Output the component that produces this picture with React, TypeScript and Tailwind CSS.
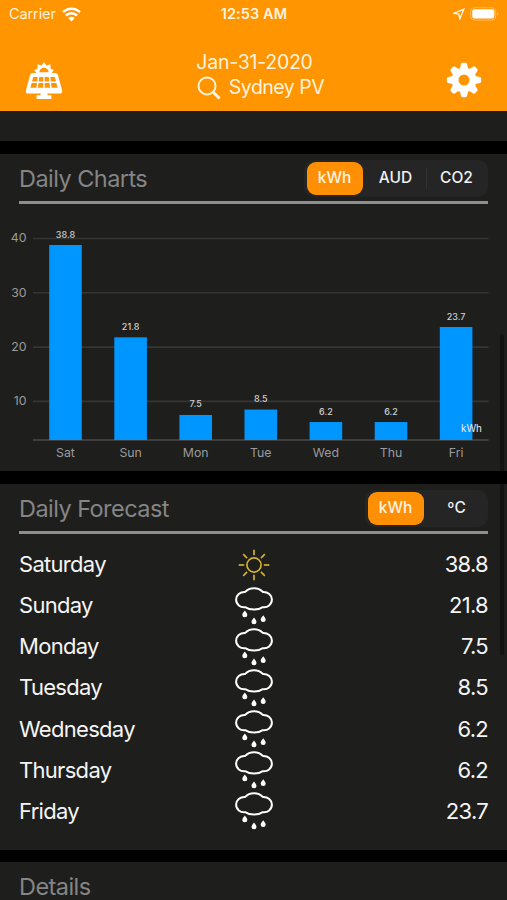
type Day = {
  name: string;
  kwh: number;
  sunny?: boolean;
};

const DAYS: Day[] = [
  { name: 'Saturday', kwh: 38.8, sunny: true },
  { name: 'Sunday', kwh: 21.8 },
  { name: 'Monday', kwh: 7.5 },
  { name: 'Tuesday', kwh: 8.5 },
  { name: 'Wednesday', kwh: 6.2 },
  { name: 'Thursday', kwh: 6.2 },
  { name: 'Friday', kwh: 23.7 },
];

function WifiIcon() {
  return (
    <svg width="19" height="15" viewBox="0 0 19 15" fill="none" stroke="#fff" strokeWidth="2.5">
      <path d="M1 5.2a12 12 0 0 1 17 0" />
      <path d="M4 8.5a7.8 7.8 0 0 1 11 0" />
      <path d="M9.5 14.4 6.3 11a4.5 4.5 0 0 1 6.4 0Z" fill="#fff" stroke="none" />
    </svg>
  );
}

function BatteryIcon() {
  return (
    <svg width="29" height="14" viewBox="0 0 29 14">
      <rect x="0.7" y="0.7" width="25" height="12.4" rx="3.6" fill="none" stroke="#ffd08a" strokeOpacity="0.65" />
      <rect x="2.3" y="2.3" width="22" height="9.2" rx="2" fill="#fff" />
      <path d="M27 4.7c1.8.7 1.8 3.7 0 4.4Z" fill="#ffd08a" fillOpacity="0.75" />
    </svg>
  );
}

function SolarPanelIcon() {
  return (
    <svg width="38" height="38" viewBox="0 0 38 38" fill="#fff">
      <path d="m19 0 2.3 3.6 4.2-1.3v4.2l3.2 1.5-2.2 3.5H11.5L9.3 8l3.2-1.500V2.300l4.200 1.300Z" />
      <path d="M14.4 10.3a4.6 4.6 0 0 1 9.2 0Z" fill="#ff9500" />
      <path d="M8.2 11h21.6c1.9 0 2.9.9 3.3 2.5l4 14.9c.5 2-.5 3.2-2.4 3.2H3.3c-1.9 0-2.9-1.2-2.4-3.2l4-14.900C5.300 11.900 6.300 11 8.200 11Z" />
      <path d="M15.5 31h7v2.4h-7ZM11.6 33.3h14.8v3.6H11.6Z" />
      <g fill="#ff9500">
        <path d="M8.2 15h4.5l-.5 4.5H7ZM14.2 15h4.1v4.5h-4.6ZM19.7 15h4.1l.5 4.5h-4.6ZM25.3 15h4.5l1.2 4.5h-5.2Z" />
        <path d="M6.7 20.9H12l-.6 4.9h-6ZM13.5 20.9h4.8v4.9h-5.4ZM19.7 20.9h4.8l.6 4.9h-5.4ZM26 20.9h5.3l1.3 4.9h-6Z" />
      </g>
    </svg>
  );
}

function GearIcon() {
  return (
    <svg width="36" height="36" viewBox="-18 -18 36 36">
      {[0, 45, 90, 135, 180, 225, 270, 315].map((angle) => (
        <path
          key={angle}
          d="M-4.6-9-3.1-15.8Q-2.8-17.2-1.5-17.2H1.5Q2.8-17.2 3.1-15.8L4.6-9Z"
          fill="#fff"
          transform={`rotate(${angle})`}
        />
      ))}
      <circle r="9" fill="none" stroke="#fff" strokeWidth="7" />
    </svg>
  );
}

function SearchIcon() {
  return (
    <svg width="24" height="24" viewBox="0 0 24 24" fill="none" stroke="#fff3df">
      <circle cx="10" cy="9.9" r="8.5" strokeWidth="2" />
      <path d="m16.2 16.2 6.4 6.3" strokeWidth="3" />
    </svg>
  );
}

function SunIcon() {
  return (
    <svg width="32" height="32" viewBox="-16 -16 32 32" fill="none" stroke="#d3b12c" strokeWidth="1.7">
      <circle r="7.1" />
      {[0, 45, 90, 135, 180, 225, 270, 315].map((angle) => (
        <path key={angle} d="M0-9.8V-15.3" transform={`rotate(${angle})`} />
      ))}
    </svg>
  );
}

function RainIcon() {
  return (
    <svg width="38" height="38" viewBox="0 0 38 38">
      <path
        d="M10.200 4.900C12.400 2.400 15.500 1.200 19 1.200s6.600 1.200 8.800 3.700C33 4.600 36.900 8 36.900 12.600c0 4.900-4.200 8.500-9.500 7.600C25.400 21.800 22.300 22.500 19 22.500s-6.400-.7-8.400-2.300C5.300 21.100 1.100 17.500 1.100 12.600c0-4.600 3.900-8 9.100-7.700Z"
        fill="none"
        stroke="#fff"
        strokeWidth="2"
        strokeLinejoin="round"
      />
      <g fill="#fff">
        <path d="M9.8 23.5c1.7 2.2 2.5 3.3 2.5 4.4a2.5 2.3 0 0 1-5 0c0-1.1.8-2.2 2.5-4.4Z" />
        <path d="M19 30.500c1.7 2.2 2.5 3.3 2.5 4.4a2.5 2.3 0 0 1-5 0c0-1.1.8-2.2 2.5-4.4Z" />
        <path d="M28.2 28.300c1.7 2.2 2.5 3.3 2.5 4.4a2.5 2.3 0 0 1-5 0c0-1.1.8-2.2 2.5-4.4Z" />
      </g>
    </svg>
  );
}

function Header() {
  return (
    <header className="h-[111px] shrink-0 bg-[#ff9500] text-[#fff3df]">
      <div className="grid h-7 grid-cols-3 items-center pl-[9px] pr-[8px]">
        <div className="flex items-center gap-[6px] text-[14.5px] leading-none tracking-[-0.1px]">
          Carrier
          <WifiIcon />
        </div>
        <div className="whitespace-nowrap text-center text-[14.5px] font-semibold tracking-[0.1px]">12:53 AM</div>
        <div className="flex items-center justify-end gap-[5px]">
          <svg width="12" height="12" viewBox="0 0 12 12" fill="none" stroke="#fff" strokeWidth="1.2">
            <path d="M10.9 1.1 1 5.3l4.9.8.8 4.9Z" />
          </svg>
          <BatteryIcon />
        </div>
      </div>
      <div className="flex items-start justify-between px-[25px]">
        <div className="pt-[34px]">
          <SolarPanelIcon />
        </div>
        <div className="flex flex-col items-center pt-[21px]">
          <div className="text-[19.5px] leading-[26px] tracking-[-0.25px]">Jan-31-2020</div>
          <div className="flex items-center gap-[8px] pl-[12px] text-[19.5px] leading-[25px] tracking-[-0.5px]">
            <SearchIcon />
            Sydney PV
          </div>
        </div>
        <div className="pt-[34px]">
          <GearIcon />
        </div>
      </div>
    </header>
  );
}

function Segmented({ items }: { items: string[] }) {
  return (
    <div className="mb-[2px] flex h-[37px] items-center rounded-[10px] bg-[#252525] pr-px">
      {items.map((item, i) => (
        <div
          key={item}
          className="relative flex w-[61px] items-center justify-center text-[15.5px] font-medium text-[#f0f0f0]"
        >
          {i > 1 && <div className="absolute left-0 h-[21px] w-px bg-[#333333]" />}
          <div
            className={`flex h-[33px] w-[56px] items-center justify-center ${
              i === 0 ? 'rounded-[9px] bg-[#ff8f05] text-[#fff3e0]' : ''
            }`}
          >
            {item}
          </div>
        </div>
      ))}
    </div>
  );
}

function SectionHeader({ title, items }: { title: string; items?: string[] }) {
  return (
    <div className="flex h-[50px] items-center justify-between border-b-[3px] border-[#8e8e8e] pt-[3px]">
      <h2 className="text-[23.5px] tracking-[-0.55px] text-[#858585]">{title}</h2>
      {items && <Segmented items={items} />}
    </div>
  );
}

function DailyChart() {
  const base = 236;
  const toY = (value: number) => 34.5 + (40 - value) * 5.43;

  return (
    <svg className="block" width="507" height="267" viewBox="0 0 507 267">
      {[40, 30, 20, 10].map((tick) => (
        <g key={tick}>
          <path d={`M33 ${toY(tick)}H488.5`} stroke="#353535" strokeWidth="1.6" />
          <text x="26.5" y={toY(tick) + 3.7} textAnchor="end" fontSize="12.3" fill="#9b9b9b">
            {tick}
          </text>
        </g>
      ))}
      <path d={`M33 ${base}H488.5`} stroke="#4a4a4a" strokeWidth="1.4" />
      {DAYS.map((day, i) => {
        const x = 49.2 + i * 65.1;
        const y = toY(day.kwh);
        return (
          <g key={day.name} textAnchor="middle">
            <rect x={x} y={y} width="32.6" height={base - y} fill="#0096ff" />
            <text x={x + 16.3} y={y - 7.5} fontSize="9" fontWeight="500" fill="#d0d0d0">
              {day.kwh}
            </text>
            <text x={x + 16.3} y="253" fontSize="12.3" fill="#9b9b9b">
              {day.name.slice(0, 3)}
            </text>
          </g>
        );
      })}
      <text x="461" y="228" fontSize="9.8" fill="#f0f0f0">
        kWh
      </text>
    </svg>
  );
}

export default function App() {
  return (
    <div className="relative flex h-[900px] w-[507px] flex-col overflow-hidden bg-black font-['Inter','Liberation_Sans',sans-serif]">
      <Header />

      <div className="h-[30px] shrink-0 bg-[#1e1e1d]" />

      <section className="mt-[13px] h-[317px] shrink-0 bg-[#1e1e1d]">
        <div className="px-[19px]">
          <SectionHeader title="Daily Charts" items={['kWh', 'AUD', 'CO2']} />
        </div>
        <DailyChart />
      </section>

      <section className="mt-[13px] h-[366px] shrink-0 bg-[#1e1e1d] px-[19px]">
        <SectionHeader title="Daily Forecast" items={['kWh', 'ºC']} />
        <div className="pt-[10px]">
          {DAYS.map((day) => (
            <div
              key={day.name}
              className="grid h-[41.15px] grid-cols-[1fr_38px_1fr] items-center text-[22px] tracking-[-0.7px] text-[#f4f4f4]"
            >
              <div>{day.name}</div>
              <div className="flex justify-center">{day.sunny ? <SunIcon /> : <RainIcon />}</div>
              <div className="text-right">{day.kwh}</div>
            </div>
          ))}
        </div>
      </section>

      <section className="mt-[12px] h-[38px] shrink-0 overflow-hidden bg-[#1e1e1d] px-[19px]">
        <SectionHeader title="Details" />
      </section>

      {/* Scroll indicator */}
      <div className="absolute right-[3px] top-[334px] h-[321px] w-[4px] rounded-full bg-black/35" />
    </div>
  );
}
